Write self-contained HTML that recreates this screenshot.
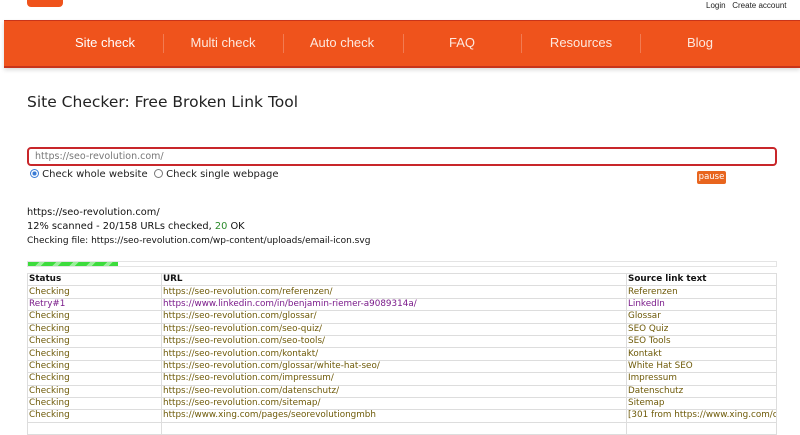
<!DOCTYPE html>
<html><head><meta charset="utf-8"><style>
body{margin:0;width:800px;height:422px;overflow:hidden;background:#fff;font-family:"DejaVu Sans","Liberation Sans",sans-serif;position:relative}
.abs{position:absolute}
.nav{left:4px;top:20px;width:796px;height:45px;background:#ef531c;border-top:1px solid #c8341a;border-bottom:2px solid #c8341a;box-shadow:0 2px 4px rgba(0,0,0,.15)}
.nav span{position:absolute;top:14px;color:#fde9df;font-family:"Liberation Sans",sans-serif;font-size:13px;transform:translateX(-50%)}
.nav i{position:absolute;top:13px;width:1px;height:19px;background:#f27b52}
table{border-collapse:collapse;font-size:8.8px;table-layout:fixed}
td{border:1px solid #ddd;height:11.4px;padding:0 1px;white-space:nowrap;overflow:hidden;color:#6e5a08;line-height:11px}
tr.h td{color:#111;font-weight:bold}
tr.p td{color:#7a1a8a}
</style></head><body>
<div class="abs" style="left:27px;top:0;width:36px;height:7px;background:#ef531c;border-radius:0 0 4px 4px"></div>
<div class="abs" style="left:706px;top:1px;font-size:8px;font-family:'Liberation Sans',sans-serif;color:#222">Login&nbsp;&nbsp; Create account</div>
<div class="abs nav">
<span style="left:101px;color:#fff">Site check</span><i style="left:159px"></i>
<span style="left:219px">Multi check</span><i style="left:279px"></i>
<span style="left:338px">Auto check</span><i style="left:399px"></i>
<span style="left:458px">FAQ</span><i style="left:517px"></i>
<span style="left:577px">Resources</span><i style="left:636px"></i>
<span style="left:696px">Blog</span>
</div>
<div class="abs" style="left:27px;top:93px;font-size:15.5px;color:#222">Site Checker: Free Broken Link Tool</div>
<div class="abs" style="left:27px;top:147px;width:740px;height:15px;border:2px solid #c8262a;border-radius:4px;font-size:9.5px;color:#777;line-height:15px;padding-left:6px">https://seo-revolution.com/</div>
<div class="abs" style="left:30px;top:169px;font-size:10px;color:#222"><span style="display:inline-block;width:7px;height:7px;border:1px solid #3a7bd5;border-radius:50%;background:radial-gradient(#3a7bd5 40%,#fff 45%);vertical-align:-1px"></span> Check whole website &nbsp;<span style="display:inline-block;width:7px;height:7px;border:1px solid #777;border-radius:50%;vertical-align:-1px"></span> Check single webpage</div>
<div class="abs" style="left:697px;top:171px;width:29px;height:13px;background:#e8651e;border-radius:2px;color:#fff;font-size:8.5px;text-align:center;line-height:13px">pause</div>
<div class="abs" style="left:27px;top:206px;font-size:9.8px;color:#111;line-height:14px">https://seo-revolution.com/<br>12% scanned - 20/158 URLs checked, <span style="color:#2a8a2a">20</span> OK<br><span style="font-size:9px">Checking file: https://seo-revolution.com/wp-content/uploads/email-icon.svg</span></div>
<div class="abs" style="left:27px;top:261px;width:748px;height:4px;border:1px solid #e4e4e4"><div style="width:90px;height:4px;background:repeating-linear-gradient(135deg,#3ddc3d 0 8px,#9af09a 8px 12px)"></div></div>
<table class="abs" style="left:27px;top:273px;width:750px">
<col style="width:134px"><col style="width:465px"><col>
<tr class="h"><td>Status</td><td>URL</td><td>Source link text</td></tr>
<tr><td>Checking</td><td>https://seo-revolution.com/referenzen/</td><td>Referenzen</td></tr>
<tr class="p"><td>Retry#1</td><td>https://www.linkedin.com/in/benjamin-riemer-a9089314a/</td><td>LinkedIn</td></tr>
<tr><td>Checking</td><td>https://seo-revolution.com/glossar/</td><td>Glossar</td></tr>
<tr><td>Checking</td><td>https://seo-revolution.com/seo-quiz/</td><td>SEO Quiz</td></tr>
<tr><td>Checking</td><td>https://seo-revolution.com/seo-tools/</td><td>SEO Tools</td></tr>
<tr><td>Checking</td><td>https://seo-revolution.com/kontakt/</td><td>Kontakt</td></tr>
<tr><td>Checking</td><td>https://seo-revolution.com/glossar/white-hat-seo/</td><td>White Hat SEO</td></tr>
<tr><td>Checking</td><td>https://seo-revolution.com/impressum/</td><td>Impressum</td></tr>
<tr><td>Checking</td><td>https://seo-revolution.com/datenschutz/</td><td>Datenschutz</td></tr>
<tr><td>Checking</td><td>https://seo-revolution.com/sitemap/</td><td>Sitemap</td></tr>
<tr><td>Checking</td><td>https://www.xing.com/pages/seorevolutiongmbh</td><td>[301 from https://www.xing.com/companies/</td></tr>
<tr><td></td><td></td><td></td></tr>
</table>
</body></html>
